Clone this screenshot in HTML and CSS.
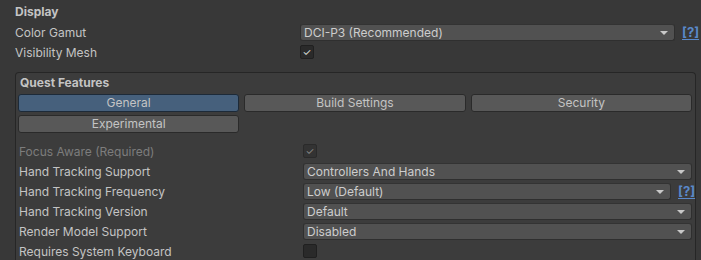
FILE: index.html
```html
<!DOCTYPE html>
<html lang="en">
<head>
    <meta charset="UTF-8">
    <title>Display Settings</title>
    <link rel="stylesheet" href="styles.css">
</head>
<body>

    <!-- display section -->
    <section class="display">
        <h2 class="header">Display</h2>

        <div class="row">
            <span class="label">Color Gamut</span>
            <div class="value">
                <div class="dropdown">DCI-P3 (Recommended)</div>
                <a class="help" href="#">[?]</a>
            </div>
        </div>

        <div class="row">
            <span class="label">Visibility Mesh</span>
            <div class="value">
                <span class="check on">&#10003;</span>
            </div>
        </div>
    </section>

    <!-- quest features box -->
    <section class="quest">
        <h3 class="header">Quest Features</h3>

        <div class="tabs">
            <button class="tab active">General</button>
            <button class="tab">Build Settings</button>
            <button class="tab">Security</button>
            <button class="tab">Experimental</button>
        </div>

        <div class="fields">
            <div class="row">
                <span class="label disabled">Focus Aware (Required)</span>
                <div class="value">
                    <span class="check on muted">&#10003;</span>
                </div>
            </div>

            <div class="row">
                <span class="label">Hand Tracking Support</span>
                <div class="value">
                    <div class="dropdown">Controllers And Hands</div>
                </div>
            </div>

            <div class="row">
                <span class="label">Hand Tracking Frequency</span>
                <div class="value">
                    <div class="dropdown">Low (Default)</div>
                    <a class="help" href="#">[?]</a>
                </div>
            </div>

            <div class="row">
                <span class="label">Hand Tracking Version</span>
                <div class="value">
                    <div class="dropdown">Default</div>
                </div>
            </div>

            <div class="row">
                <span class="label">Render Model Support</span>
                <div class="value">
                    <div class="dropdown">Disabled</div>
                </div>
            </div>

            <div class="row">
                <span class="label">Requires System Keyboard</span>
                <div class="value">
                    <span class="check"></span>
                </div>
            </div>
        </div>
    </section>

</body>
</html>
```

FILE: styles.css
```css
* {
  padding: 0;
  margin: 0;
  box-sizing: border-box;
  font-family: Inter, "Noto Sans", sans-serif;
}

body {
  background-color: #383838;
  color: #c4c4c4;
  font-size: 12px;
  width: 701px;
  height: 260px;
  overflow: hidden;
  padding: 2px 4px 0 15px;
}

.header {
  font-size: 12px;
  font-weight: 700;
  line-height: 20px;
}

.row {
  display: grid;
  grid-template-columns: 285px 1fr;
  align-items: center;
  height: 20px;

  .label {
    white-space: nowrap;
  }

  .label.disabled {
    color: #7d7d7d;
  }

  .value {
    display: flex;
    align-items: center;
    gap: 7px;
  }
}

.dropdown {
  flex: 1;
  position: relative;
  height: 17px;
  line-height: 15px;
  padding-left: 3px;
  background-color: #515151;
  border: 1px solid #2f2f2f;
  border-top-color: #333333;
  border-radius: 3px;
  color: #cdcdcd;
}

.dropdown::after {
  content: "";
  position: absolute;
  right: 6px;
  top: 6px;
  border-left: 4px solid transparent;
  border-right: 4px solid transparent;
  border-top: 4px solid #c8c8c8;
}

.help {
  color: #5a88c8;
  font-size: 13px;
  font-weight: 700;
  line-height: 15px;
  text-decoration: underline;
  text-underline-offset: 2px;
  width: 15px;
}

.check {
  width: 14px;
  height: 14px;
  background-color: #2a2a2a;
  border: 1px solid #202020;
  border-radius: 2px;
  color: #e0e0e0;
  font-size: 10px;
  line-height: 12px;
  text-align: center;
}

.check.muted {
  color: #8a8a8a;
  background-color: #333333;
  border-color: #2a2a2a;
}

.quest {
  margin-top: 10px;
  width: 681px;
  height: 200px;
  background-color: #3c3c3c;
  border: 1px solid #262626;
  border-bottom: none;
  border-radius: 4px 4px 0 0;
  padding: 0 3px 0 2px;

  .header {
    padding-left: 2px;
  }

  .tabs {
    display: grid;
    grid-template-columns: 1fr 1fr 1fr;
    column-gap: 5px;
    row-gap: 3px;
    margin-top: 1px;
  }

  .tab {
    height: 18px;
    background-color: #585858;
    border: 1px solid #2a2a2a;
    border-radius: 3px;
    color: #c4c4c4;
    font-size: 12px;
    line-height: 16px;
  }

  .tab.active {
    background-color: #46607c;
    border-color: #1d2a38;
  }

  .fields {
    margin-top: 8px;
    padding-left: 1px;
  }

  .row {
    grid-template-columns: 284px 1fr;
  }

  .help {
    width: 14px;
  }
}
```
